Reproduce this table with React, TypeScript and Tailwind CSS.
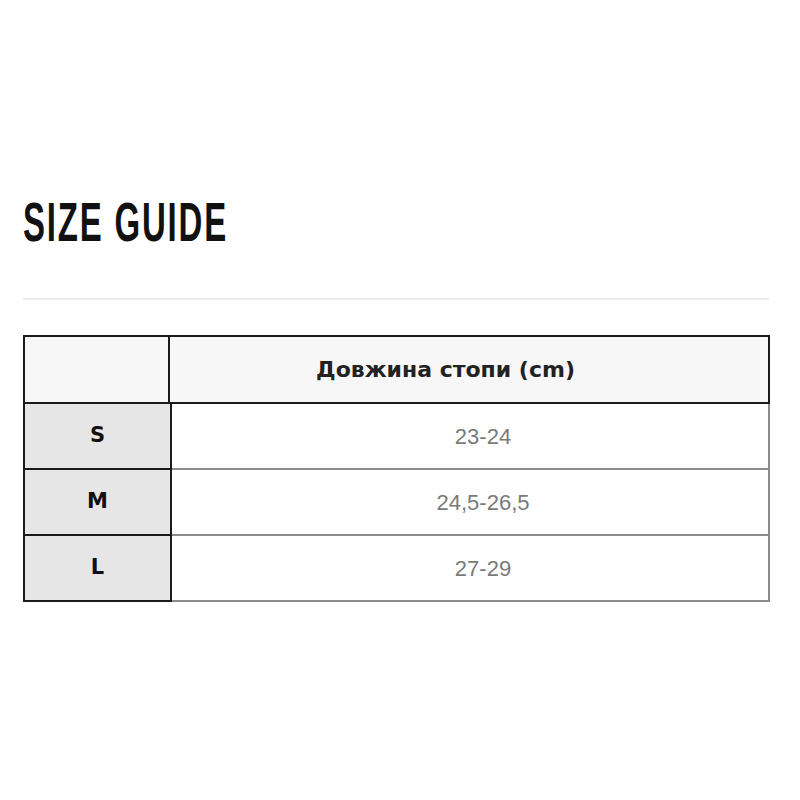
export default function App() {
  const rows = [
    { size: "S", value: "23-24" },
    { size: "M", value: "24,5-26,5" },
    { size: "L", value: "27-29" },
  ];
  return (
    <div className="min-h-[800px] bg-white pl-[23px] pt-[195px]">
      <h1
        className="h-[54px] origin-left scale-x-[0.6] whitespace-nowrap text-[55px] font-bold leading-none tracking-[3px] text-[#111]"
        style={{ fontFamily: '"Liberation Sans", Arial, sans-serif' }}
      >
        SIZE GUIDE
      </h1>
      <div className="mt-[49px] h-[2px] w-[746px] bg-[#ececec]" />
      <div
        className="mt-[35px] flex w-[747px] flex-col"
        style={{ fontFamily: '"DejaVu Sans", Verdana, sans-serif' }}
      >
        <div className="flex h-[69px] border-2 border-[#1a1a1a] bg-[#f7f7f7]">
          <div className="w-[145px] border-r-2 border-[#1a1a1a]" />
          <div className="flex flex-1 items-center justify-center pr-[47px] text-[22px] font-bold text-[#222]">
            Довжина стопи (cm)
          </div>
        </div>
        {rows.map((r) => (
          <div key={r.size} className="flex h-[66px]">
            <div className="flex w-[149px] items-center justify-center border-x-2 border-b-2 border-[#1a1a1a] bg-[#e6e6e6] text-[21px] font-bold text-[#111]">
              {r.size}
            </div>
            <div
              className="flex flex-1 items-center justify-center border-b-2 border-r-2 border-[#8c8c8c] pl-[26px] text-[22px] text-[#7a7a7a]"
              style={{ fontFamily: '"Liberation Sans", Arial, sans-serif' }}
            >
              {r.value}
            </div>
          </div>
        ))}
      </div>
    </div>
  );
}
